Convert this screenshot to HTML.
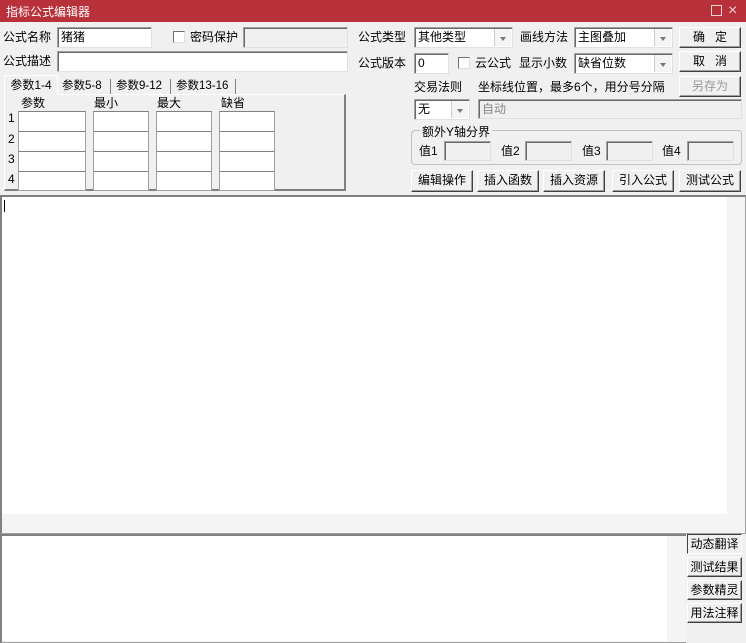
<!DOCTYPE html>
<html><head><meta charset="utf-8"><style>
*{box-sizing:border-box;margin:0;padding:0}
body{width:746px;height:643px;background:#f0f0f0;font:12px "Liberation Sans","Noto Sans CJK SC",sans-serif;color:#000;position:relative;overflow:hidden}
.a{position:absolute;white-space:nowrap}
.t{position:absolute;line-height:20px;white-space:nowrap}
.in{position:absolute;background:#fff;border:1px solid #a0a0a0;border-right-color:#e0e0e0;border-bottom-color:#e0e0e0;box-shadow:inset 1px 1px 0 #696969;padding-left:3px;line-height:18px}
.dis{background:#f0f0f0;color:#888}
.btn{position:absolute;background:#f0f0f0;border:1px solid #fff;border-right-color:#404040;border-bottom-color:#404040;box-shadow:inset -1px -1px 0 #a0a0a0;text-align:center;line-height:19px}
.cb{position:absolute;width:12px;height:12px;border:1px solid #707070;border-right-color:#ddd;border-bottom-color:#ddd;background:#fff}
.dd{position:absolute;top:1px;right:1px;width:17px;bottom:1px;border-left:1px solid #ccc;background:#f4f4f4}
.dd:after{content:"";position:absolute;left:5px;top:8px;border:3px solid transparent;border-top:4px solid #777}
.cell{position:absolute;background:#fff;border:1px solid #a0a0a0;border-top-color:#808080}
</style></head><body>
<div class="a" style="left:0;top:0;width:746px;height:22px;background:#b7303a"></div>
<div class="a" style="left:6px;top:3px;color:#fff;font-size:12px">指标公式编辑器</div>
<div class="a" style="left:711px;top:5px;width:11px;height:11px;border:1px solid #f3d0d0"></div>
<div class="a" style="left:728px;top:0;color:#f3d0d0;font-size:16px;line-height:22px">×</div>

<div class="t" style="left:3px;top:27px">公式名称</div>
<div class="in" style="left:57px;top:27px;width:95px;height:21px">猪猪</div>
<div class="cb" style="left:173px;top:31px"></div>
<div class="t" style="left:190px;top:27px">密码保护</div>
<div class="in dis" style="left:243px;top:27px;width:105px;height:21px"></div>
<div class="t" style="left:3px;top:51px">公式描述</div>
<div class="in" style="left:57px;top:51px;width:291px;height:21px"></div>

<div class="t" style="left:358px;top:27px">公式类型</div>
<div class="in" style="left:414px;top:27px;width:99px;height:21px">其他类型<div class="dd"></div></div>
<div class="t" style="left:520px;top:27px">画线方法</div>
<div class="in" style="left:574px;top:27px;width:99px;height:21px">主图叠加<div class="dd"></div></div>
<div class="btn" style="left:679px;top:27px;width:62px;height:21px">确&nbsp;&nbsp;&nbsp;定</div>
<div class="t" style="left:358px;top:53px">公式版本</div>
<div class="in" style="left:414px;top:53px;width:35px;height:21px">0</div>
<div class="cb" style="left:458px;top:57px"></div>
<div class="t" style="left:475px;top:53px">云公式</div>
<div class="t" style="left:519px;top:53px">显示小数</div>
<div class="in" style="left:574px;top:53px;width:99px;height:21px">缺省位数<div class="dd"></div></div>
<div class="btn" style="left:679px;top:51px;width:62px;height:21px">取&nbsp;&nbsp;&nbsp;消</div>
<div class="t" style="left:414px;top:77px">交易法则</div>
<div class="t" style="left:478px;top:77px">坐标线位置，最多6个，用分号分隔</div>
<div class="btn" style="left:679px;top:76px;width:62px;height:21px;color:#999">另存为</div>
<div class="in" style="left:414px;top:99px;width:56px;height:21px">无<div class="dd"></div></div>
<div class="in dis" style="left:478px;top:99px;width:264px;height:20px">自动</div>
<div class="a" style="left:411px;top:130px;width:331px;height:35px;border:1px solid #c0c0c0;border-radius:4px"></div>
<div class="a" style="left:420px;top:123px;background:#f0f0f0;padding:0 2px">额外Y轴分界</div>
<div class="t" style="left:419px;top:141px">值1</div><div class="in dis" style="left:444px;top:141px;width:47px;height:20px"></div>
<div class="t" style="left:501px;top:141px">值2</div><div class="in dis" style="left:525px;top:141px;width:47px;height:20px"></div>
<div class="t" style="left:582px;top:141px">值3</div><div class="in dis" style="left:606px;top:141px;width:47px;height:20px"></div>
<div class="t" style="left:662px;top:141px">值4</div><div class="in dis" style="left:687px;top:141px;width:47px;height:20px"></div>
<div class="btn" style="left:411px;top:170px;width:62px;height:22px">编辑操作</div>
<div class="btn" style="left:477px;top:170px;width:62px;height:22px">插入函数</div>
<div class="btn" style="left:543px;top:170px;width:62px;height:22px">插入资源</div>
<div class="btn" style="left:612px;top:170px;width:62px;height:22px">引入公式</div>
<div class="btn" style="left:679px;top:170px;width:62px;height:22px">测试公式</div>

<div class="a" style="left:4px;top:94px;width:342px;height:97px;border:1px solid #fff;border-right:2px solid #808080;border-bottom:2px solid #808080"></div>
<div class="a" style="left:4px;top:75px;width:54px;height:20px;background:#f0f0f0;border:1px solid #fff;border-bottom:none;text-align:center;line-height:18px">参数1-4</div>
<div class="t" style="left:62px;top:76px;font-size:11.5px">参数5-8</div>
<div class="a" style="left:110px;top:79px;height:15px;border-left:1px solid #808080"></div>
<div class="t" style="left:116px;top:76px;font-size:11.5px">参数9-12</div>
<div class="a" style="left:170px;top:79px;height:15px;border-left:1px solid #808080"></div>
<div class="t" style="left:176px;top:76px;font-size:11.5px">参数13-16</div>
<div class="a" style="left:235px;top:79px;height:15px;border-left:1px solid #808080"></div>
<div class="t" style="left:21px;top:93px">参数</div>
<div class="t" style="left:94px;top:93px">最小</div>
<div class="t" style="left:157px;top:93px">最大</div>
<div class="t" style="left:221px;top:93px">缺省</div>
<div class="t" style="left:8px;top:108px">1</div><div class="t" style="left:8px;top:129px">2</div><div class="t" style="left:8px;top:149px">3</div><div class="t" style="left:8px;top:169px">4</div>
<div class="cell" style="left:18px;top:111px;width:68px;height:21px"></div><div class="cell" style="left:93px;top:111px;width:56px;height:21px"></div><div class="cell" style="left:156px;top:111px;width:56px;height:21px"></div><div class="cell" style="left:219px;top:111px;width:56px;height:21px"></div>
<div class="cell" style="left:18px;top:131px;width:68px;height:21px"></div><div class="cell" style="left:93px;top:131px;width:56px;height:21px"></div><div class="cell" style="left:156px;top:131px;width:56px;height:21px"></div><div class="cell" style="left:219px;top:131px;width:56px;height:21px"></div>
<div class="cell" style="left:18px;top:151px;width:68px;height:21px"></div><div class="cell" style="left:93px;top:151px;width:56px;height:21px"></div><div class="cell" style="left:156px;top:151px;width:56px;height:21px"></div><div class="cell" style="left:219px;top:151px;width:56px;height:21px"></div>
<div class="cell" style="left:18px;top:171px;width:68px;height:20px"></div><div class="cell" style="left:93px;top:171px;width:56px;height:20px"></div><div class="cell" style="left:156px;top:171px;width:56px;height:20px"></div><div class="cell" style="left:219px;top:171px;width:56px;height:20px"></div>

<div class="a" style="left:0;top:195px;width:746px;height:339px;background:#f4f4f4;border:1px solid #a0a0a0;border-left:2px solid #808080;border-top:2px solid #808080"></div>
<div class="a" style="left:2px;top:197px;width:725px;height:317px;background:#fff"></div>
<div class="a" style="left:4px;top:200px;width:1px;height:12px;background:#000"></div>

<div class="a" style="left:0;top:534px;width:686px;height:109px;background:#f4f4f4;border-left:2px solid #808080;border-top:2px solid #808080;border-bottom:1px solid #a0a0a0"></div>
<div class="a" style="left:2px;top:536px;width:665px;height:105px;background:#fff"></div>
<div class="btn" style="left:687px;top:534px;width:55px;height:20px;border-color:#404040 #fff #fff #404040;box-shadow:none">动态翻译</div>
<div class="btn" style="left:687px;top:557px;width:55px;height:20px">测试结果</div>
<div class="btn" style="left:687px;top:580px;width:55px;height:20px">参数精灵</div>
<div class="btn" style="left:687px;top:603px;width:55px;height:20px">用法注释</div>
</body></html>
